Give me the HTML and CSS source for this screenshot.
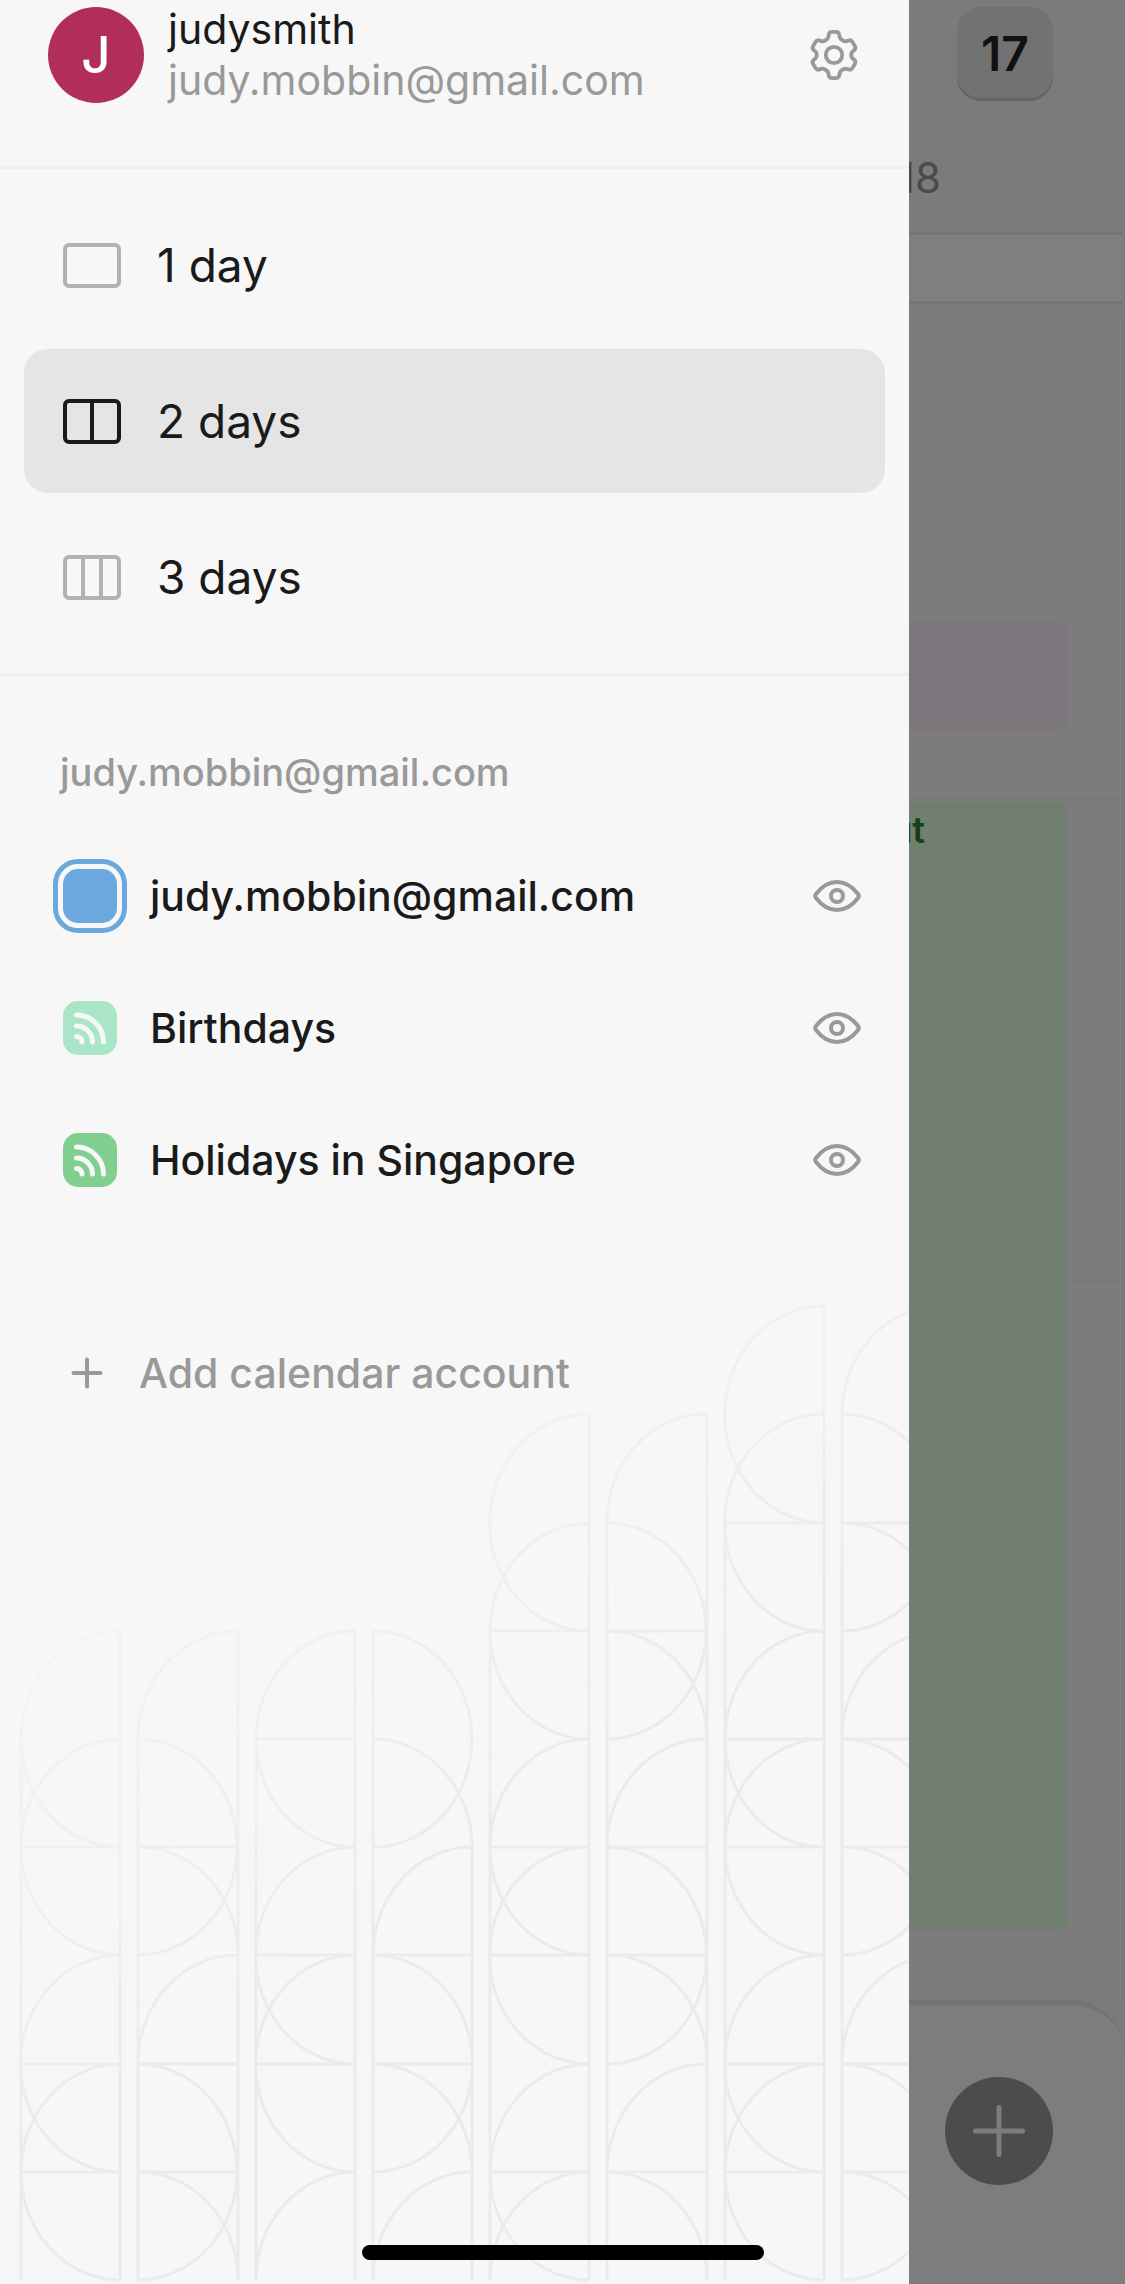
FILE: index.html
```html
<!DOCTYPE html>
<html lang="en">
<head>
  <meta charset="utf-8">
  <meta name="viewport" content="width=device-width, initial-scale=1">
  <title>Calendar</title>
  <link rel="stylesheet" href="styles.css">
</head>
<body>
  <div class="app">
    <main class="calendar">
      <header class="calendar-head">
        <button class="today" type="button" aria-label="Go to today">17</button>
        <h2 class="day-label">18</h2>
      </header>
      <div class="all-day"></div>
      <div class="all-day-edge"></div>
      <div class="timeline">
        <article class="event event-lilac"></article>
        <article class="event event-green">Workout</article>
      </div>
      <footer class="bottom-bar">
        <button class="create" type="button" aria-label="New event">
          <svg class="create-icon" viewBox="0 0 52 52" aria-hidden="true"><path d="M26 2.500v47M2.500 26h47"/></svg>
        </button>
      </footer>
    </main>
    <div class="scrim"></div>

    <aside class="drawer">
      <svg class="pattern" viewBox="0 0 909 984" aria-hidden="true">
        <defs>
          <linearGradient id="fade" gradientUnits="userSpaceOnUse" x1="0" y1="287" x2="277" y2="679">
            <stop offset="0" stop-color="#fff" stop-opacity="0.080"/>
            <stop offset="1" stop-color="#fff"/>
          </linearGradient>
          <mask id="fade-mask" maskUnits="userSpaceOnUse" x="0" y="0" width="909" height="984">
            <rect width="909" height="984" fill="url(#fade)"/>
          </mask>
        </defs>
        <g class="pattern-lines" mask="url(#fade-mask)">
          <path d="M120 331V980M21 439V980M120 331A99 108 0 0 0 120 547M120 439A99 108 0 0 0 120 655M120 655A99 108 0 0 0 120 872M120 764A99 108 0 0 0 120 980M21 547H120M21 764H120M21 872H120"/>
          <path d="M138 439V980M238 331V980M238 331A99 108 0 0 0 138 439M138 439A99 108 0 0 1 138 655M138 547A99 108 0 0 1 238 655M238 655A99 108 0 0 0 138 764M138 764A99 108 0 0 1 138 980M138 872A99 108 0 0 1 238 980M138 547H238M138 764H238M138 872H238"/>
          <path d="M355 331V980M256 439V980M355 331A99 108 0 0 0 355 547M355 547A99 108 0 0 0 355 764M355 655A99 108 0 0 0 355 872M355 872A99 108 0 0 0 256 980M256 439H355M256 655H355M256 764H355"/>
          <path d="M373 331V980M472 547V980M373 331A99 108 0 0 1 373 547M373 439A99 108 0 0 1 472 547M472 547A99 108 0 0 0 373 655M373 655A99 108 0 0 1 373 872M373 764A99 108 0 0 1 472 872M472 872A99 108 0 0 0 373 980M373 655H472M373 764H472"/>
          <path d="M589 114V980M490 331V980M589 114A99 108 0 0 0 589 331M589 223A99 108 0 0 0 589 439M589 439A99 108 0 0 0 589 655M589 547A99 108 0 0 0 589 764M589 764A99 108 0 0 0 589 980M589 872A99 108 0 0 0 490 980M490 331H589M490 547H589M490 655H589M490 872H589"/>
          <path d="M607 223V980M707 114V980M707 114A99 108 0 0 0 607 223M607 223A99 108 0 0 1 607 439M607 331A99 108 0 0 1 707 439M707 439A99 108 0 0 0 607 547M607 547A99 108 0 0 1 607 764M607 655A99 108 0 0 1 707 764M707 764A99 108 0 0 0 607 872M607 872A99 108 0 0 1 707 980M607 331H707M607 547H707M607 655H707M607 872H707"/>
          <path d="M824 6V980M725 223V980M824 6A99 108 0 0 0 824 223M824 114A99 108 0 0 0 824 331M824 331A99 108 0 0 0 824 547M824 439A99 108 0 0 0 824 655M824 655A99 108 0 0 0 824 872M824 764A99 108 0 0 0 824 980M725 223H824M725 439H824M725 547H824M725 764H824M725 872H824"/>
          <path d="M842 114V980M942 6A99 108 0 0 0 842 114M842 114A99 108 0 0 1 842 331M842 223A99 108 0 0 1 942 331M942 331A99 108 0 0 0 842 439M842 439A99 108 0 0 1 842 655M842 547A99 108 0 0 1 942 655M942 655A99 108 0 0 0 842 764M842 764A99 108 0 0 1 842 980M842 872A99 108 0 0 1 942 980M842 223H942M842 439H942M842 547H942M842 764H942M842 872H942"/>
        </g>
      </svg>

      <header class="profile">
        <span class="avatar" aria-hidden="true">J</span>
        <div class="profile-text">
          <span class="profile-name">judysmith</span>
          <span class="profile-email">judy.mobbin@gmail.com</span>
        </div>
        <button class="icon-button" type="button" aria-label="Settings">
          <svg class="gear" viewBox="0 0 52 52" aria-hidden="true">
            <path d="M20.500 5Q21 2 24 2H28Q31 2 31.500 5L32 7.500Q32.400 9.300 34 10L36 11.300Q37.500 12.300 39.300 11.600L41 11Q43.800 10 45.300 12.600L47.700 16.700Q49.200 19.300 46.800 21.200L45.400 22.400Q44 23.500 44 25V27Q44 28.500 45.400 29.600L46.800 30.800Q49.200 32.700 47.700 35.300L45.300 39.400Q43.800 42 41 41L39.300 40.400Q37.500 39.700 36 40.700L34 42Q32.400 42.700 32 44.500L31.500 47Q31 50 28 50H24Q21 50 20.500 47L20 44.500Q19.600 42.700 18 42L16 40.700Q14.500 39.700 12.700 40.400L11 41Q8.200 42 6.700 39.400L4.300 35.300Q2.800 32.700 5.200 30.800L6.600 29.600Q8 28.500 8 27V25Q8 23.500 6.600 22.400L5.200 21.200Q2.800 19.300 4.300 16.700L6.700 12.600Q8.200 10 11 11L12.700 11.600Q14.500 12.300 16 11.300L18 10Q19.600 9.300 20 7.500Z"/>
            <circle cx="26" cy="26" r="8.500"/>
          </svg>
        </button>
      </header>

      <nav class="views" aria-label="View">
        <button class="view" type="button">
          <svg class="view-icon" viewBox="0 0 58 45" aria-hidden="true"><rect x="2" y="2" width="54" height="41" rx="4"/></svg>
          1 day
        </button>
        <button class="view view-active" type="button" aria-current="true">
          <svg class="view-icon" viewBox="0 0 58 45" aria-hidden="true"><rect x="2" y="2" width="54" height="41" rx="4"/><path d="M29 2V43"/></svg>
          2 days
        </button>
        <button class="view" type="button">
          <svg class="view-icon" viewBox="0 0 58 45" aria-hidden="true"><rect x="2" y="2" width="54" height="41" rx="4"/><path d="M20 2V43M38 2V43"/></svg>
          3 days
        </button>
      </nav>

      <section class="accounts">
        <h2 class="account-title">judy.mobbin@gmail.com</h2>
        <ul class="calendars">
          <li class="calendar-row">
            <span class="swatch swatch-blue"></span>
            <span class="calendar-name">judy.mobbin@gmail.com</span>
            <button class="icon-button" type="button" aria-label="Hide judy.mobbin@gmail.com">
              <svg class="eye" viewBox="0 0 48 34" aria-hidden="true"><path d="M3 19Q1.500 17 3 15C8 8.500 15 3 24 3S40 8.500 45 15Q46.500 17 45 19C40 25.500 33 31 24 31S8 25.500 3 19Z"/><circle cx="24" cy="17" r="6"/></svg>
            </button>
          </li>
          <li class="calendar-row">
            <span class="swatch swatch-mint">
              <svg class="feed" viewBox="0 0 54 54" aria-hidden="true"><path d="M13.500 14A27 27 0 0 1 40.500 41M13.500 25A16 16 0 0 1 29.500 41M13.500 35.500A5.500 5.500 0 0 1 19 41"/></svg>
            </span>
            <span class="calendar-name">Birthdays</span>
            <button class="icon-button" type="button" aria-label="Hide Birthdays">
              <svg class="eye" viewBox="0 0 48 34" aria-hidden="true"><path d="M3 19Q1.500 17 3 15C8 8.500 15 3 24 3S40 8.500 45 15Q46.500 17 45 19C40 25.500 33 31 24 31S8 25.500 3 19Z"/><circle cx="24" cy="17" r="6"/></svg>
            </button>
          </li>
          <li class="calendar-row">
            <span class="swatch swatch-green">
              <svg class="feed" viewBox="0 0 54 54" aria-hidden="true"><path d="M13.500 14A27 27 0 0 1 40.500 41M13.500 25A16 16 0 0 1 29.500 41M13.500 35.500A5.500 5.500 0 0 1 19 41"/></svg>
            </span>
            <span class="calendar-name">Holidays in Singapore</span>
            <button class="icon-button" type="button" aria-label="Hide Holidays in Singapore">
              <svg class="eye" viewBox="0 0 48 34" aria-hidden="true"><path d="M3 19Q1.500 17 3 15C8 8.500 15 3 24 3S40 8.500 45 15Q46.500 17 45 19C40 25.500 33 31 24 31S8 25.500 3 19Z"/><circle cx="24" cy="17" r="6"/></svg>
            </button>
          </li>
        </ul>
        <button class="add-account" type="button">
          <svg class="plus" viewBox="0 0 32 32" aria-hidden="true"><path d="M16 2.500V29.500M2.500 16H29.500"/></svg>
          Add calendar account
        </button>
      </section>
    </aside>
    <div class="home-indicator"></div>
  </div>
</body>
</html>
```

FILE: styles.css
```css
*,
*::before,
*::after {
  box-sizing: border-box;
}

body {
  margin: 0;
  background: #7c7c7c;
  color: #1a1a1a;
  font-family: Inter, "Liberation Sans", sans-serif;
}

button {
  margin: 0;
  padding: 0;
  border: 0;
  background: none;
  color: inherit;
  font: inherit;
}

svg {
  display: block;
  fill: none;
  stroke: currentColor;
  stroke-linecap: round;
}

/* Calendar, scrim and drawer share one grid cell */
.app {
  position: relative;
  display: grid;
  min-height: 100vh;
  overflow: hidden;
}

.calendar,
.scrim,
.drawer {
  grid-area: 1 / 1;
}

.scrim {
  z-index: 1;
  background: rgba(0, 0, 0, 0.5);
}

/* Calendar */
.calendar {
  display: flex;
  flex-direction: column;
  background: #f6f6f6;
}

.calendar-head {
  display: flex;
  flex-direction: column;
  align-items: flex-end;
  gap: 50px;
  padding: 7px 72px 27px 0;
}

.today {
  width: 96px;
  height: 94px;
  border-radius: 24px;
  background: #e4e4e4;
  box-shadow: inset 0 -3px #cacaca;
  color: #222;
  font-size: 48px;
  font-weight: 600;
  line-height: 90px;
}

.day-label {
  margin: 0 112px 0 0;
  color: #969696;
  font-size: 42px;
  font-weight: 400;
  line-height: 54px;
}

.all-day {
  height: 72px;
  margin-right: 3px;
  border: solid #e8e8e8;
  border-width: 3px 0;
  background: #fefefe;
}

.all-day-edge {
  height: 14px;
  background: #f9f9f9;
}

.timeline {
  flex: 1;
  display: flex;
  flex-direction: column;
  gap: 72px;
  padding: 304px 54px 70px 567px;
  border-right: 3px solid #f0f0f0;
  background: repeating-linear-gradient(#f8f8f8 0 239px, #f3f3f3 239px 241px);
}

.event {
  border-radius: 9px;
}

.event-lilac {
  height: 108px;
  background: #fcecfa;
}

.event-green {
  flex: 1;
  padding: 6px 143px 6px 18px;
  background: #e0ffde;
  color: #287e30;
  font-size: 36px;
  font-weight: 600;
  line-height: 44px;
  text-align: right;
}

.bottom-bar {
  display: flex;
  justify-content: flex-end;
  padding: 72px 72px 99px;
  border-top: 5px solid #e8e8e8;
  border-radius: 0 54px 0 0;
  background: #fafafa;
}

.create {
  display: grid;
  place-items: center;
  width: 108px;
  height: 108px;
  border-radius: 50%;
  background: #989898;
  color: #fafafa;
}

.create-icon {
  width: 52px;
  stroke-width: 5;
}

/* Drawer */
.drawer {
  position: relative;
  z-index: 2;
  width: calc(100% - 216px);
  background: #f7f7f7;
}

.pattern {
  position: absolute;
  bottom: 0;
  left: 0;
  z-index: -1;
  width: 100%;
  height: auto;
}

.pattern-lines {
  stroke: #ebebeb;
  stroke-width: 3;
  stroke-linecap: butt;
}

.icon-button {
  color: #999;
}

.profile {
  display: flex;
  align-items: center;
  gap: 24px;
  padding: 4px 50px 60px 48px;
  border-bottom: 3px solid #efefef;
}

.avatar {
  width: 96px;
  height: 96px;
  border-radius: 50%;
  background: #b12e5b;
  color: #fff;
  font-size: 51px;
  font-weight: 500;
  line-height: 96px;
  text-align: center;
}

.profile-text {
  flex: 1;
  display: flex;
  flex-direction: column;
  font-size: 41px;
  line-height: 51px;
}

.profile-email {
  color: #999;
}

.gear {
  width: 50px;
  stroke-width: 4;
}

.views {
  display: flex;
  flex-direction: column;
  gap: 12px;
  padding: 24px;
  border-bottom: 3px solid #efefef;
}

.view {
  display: flex;
  align-items: center;
  gap: 36px;
  height: 144px;
  padding: 0 39px;
  border-radius: 24px;
  font-size: 46px;
  line-height: 60px;
}

.view-active {
  background: #e5e5e5;
}

.view-icon {
  width: 58px;
  color: #b2b2b2;
  stroke-width: 4;
}

.view-active .view-icon {
  color: #1a1a1a;
}

.accounts {
  padding: 72px 48px 0 60px;
}

.account-title {
  margin: 0 0 34px;
  color: #999;
  font-size: 38px;
  font-weight: 500;
  line-height: 48px;
}

.calendars {
  margin: 0;
  padding: 0;
  list-style: none;
}

.calendar-row {
  display: flex;
  align-items: center;
  gap: 33px;
  height: 132px;
  padding-left: 3px;
}

.swatch {
  width: 54px;
  height: 54px;
  border-radius: 15px;
}

.swatch-blue {
  background: #6aa8de;
  outline: 5px solid #6aa8de;
  outline-offset: 5px;
}

.swatch-mint {
  background: #a9e6c8;
}

.swatch-green {
  background: #80cf91;
}

.feed {
  color: #f7f7f7;
  stroke-width: 5;
}

.calendar-name {
  flex: 1;
  font-size: 41px;
  font-weight: 500;
  line-height: 51px;
}

.eye {
  width: 48px;
  stroke-width: 4;
}

.add-account {
  display: flex;
  align-items: center;
  gap: 36px;
  height: 96px;
  margin-top: 99px;
  padding-left: 11px;
  color: #999;
  font-size: 41px;
  font-weight: 500;
}

.plus {
  width: 32px;
  stroke-width: 4;
}

.home-indicator {
  position: absolute;
  bottom: 24px;
  left: 50%;
  z-index: 3;
  width: 402px;
  height: 15px;
  border-radius: 8px;
  background: #000;
  transform: translateX(-50%);
}
```
